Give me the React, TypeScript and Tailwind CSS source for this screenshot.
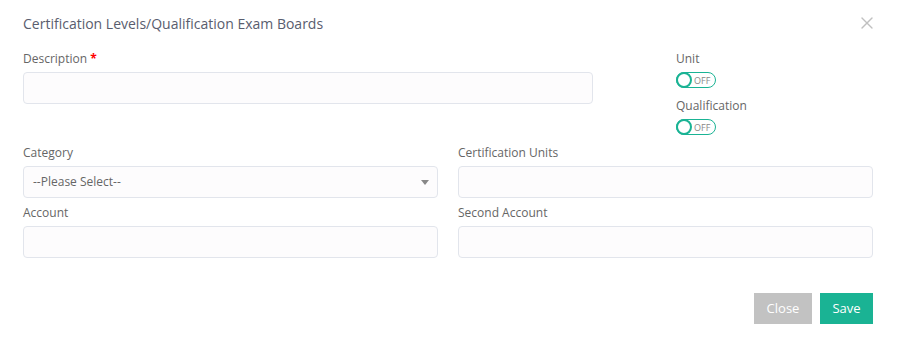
import { X } from "lucide-react";

function Toggle() {
    return (
        <div className="flex items-center w-[40px] h-[16px] rounded-full border border-[#1ab394] bg-white">
            <span className="w-[16px] h-[16px] -ml-px rounded-full border-[2px] border-[#1ab394] bg-white shrink-0" />
            <span className="ml-[2px] text-[9px] leading-none text-[#888]">OFF</span>
        </div>
    );
}

function Field({ label, select }: { label: string; select?: boolean }) {
    return (
        <div className="flex flex-col">
            <label className="text-[12px] leading-[16px] text-[#666] mb-[5px]">{label}</label>
            <div className="h-[32px] rounded-[4px] border border-[#e2e5ec] bg-[#fdfcfd] flex items-center px-[9px]">
                {select && (
                    <>
                        <span className="flex-1 text-[12px] text-[#666]">--Please Select--</span>
                        <span className="w-0 h-0 border-l-[4px] border-r-[4px] border-t-[5px] border-l-transparent border-r-transparent border-t-[#888] mr-[-1px]" />
                    </>
                )}
            </div>
        </div>
    );
}

export default function App() {
    return (
        <div className="w-[898px] h-[337px] bg-white font-['Open_Sans',sans-serif] px-[23px] pt-[12px] relative">
            <div className="flex items-center justify-between h-[22px]">
                <h2 className="text-[14px] text-[#595d6e] font-normal">Certification Levels/Qualification Exam Boards</h2>
                <X className="w-[20px] h-[20px] text-[#c0c0c0] mr-[-2px]" strokeWidth={1.6} />
            </div>

            <div className="flex mt-[17px]">
                <div className="w-[570px] flex flex-col">
                    <label className="text-[12px] leading-[16px] text-[#666] mb-[5px]">
                        Description <span className="text-[#f00] font-bold">*</span>
                    </label>
                    <div className="h-[32px] rounded-[4px] border border-[#e2e5ec] bg-[#fdfcfd]" />
                </div>
                <div className="ml-[83px] flex flex-col">
                    <span className="text-[12px] leading-[16px] text-[#666] mb-[5px]">Unit</span>
                    <Toggle />
                    <span className="text-[12px] leading-[16px] text-[#666] mt-[10px] mb-[5px]">Qualification</span>
                    <Toggle />
                </div>
            </div>

            <div className="grid grid-cols-2 gap-x-[20px] gap-y-[7px] mt-[10px] w-[850px]">
                <Field label="Category" select />
                <Field label="Certification Units" />
                <Field label="Account" />
                <Field label="Second Account" />
            </div>

            <div className="flex justify-end gap-[8px] mt-[35px] w-[850px]">
                <button className="h-[31px] w-[58px] bg-[#c2c2c2] text-white text-[13px]">Close</button>
                <button className="h-[31px] w-[53px] bg-[#1ab394] text-white text-[13px]">Save</button>
            </div>
        </div>
    );
}
